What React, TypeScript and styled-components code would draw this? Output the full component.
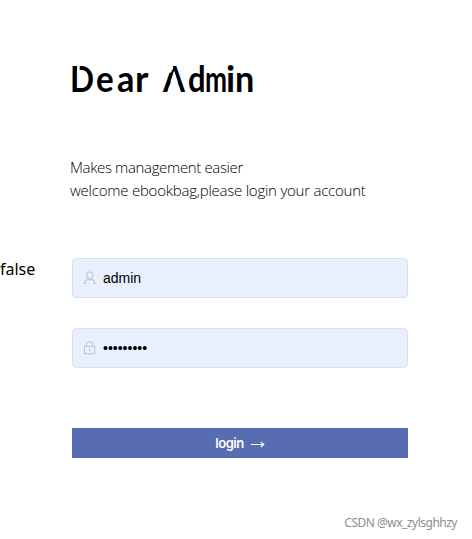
import React from 'react';
import styled, { createGlobalStyle } from 'styled-components';

const GlobalStyle = createGlobalStyle`
  * { box-sizing: border-box; }
  body { margin: 0; background: #fff; color: #000; overflow: hidden; }
`;

const Page = styled.div`
  width: 472px;
  height: 539px;
  display: grid;
  grid-template-columns: 70px 338px 1fr;
  grid-template-rows: 506px 33px;
`;

const Status = styled.span`
  padding-top: 258px;
  font: 16px/22px 'Noto Sans', sans-serif;
`;

const Panel = styled.main`
  display: flex;
  flex-direction: column;
  padding-top: 56px;
`;

const Title = styled.h1`
  display: flex;
  margin: 0;
  height: 44px;
  font: 700 36px/44px Lato, sans-serif;
  white-space: pre;
`;

const Letter = styled.span<{ $w: number; $sx?: number }>`
  position: relative;
  flex: none;
  width: ${p => p.$w}px;
  transform: scaleX(${p => p.$sx ?? 1});
  transform-origin: 0 0;
`;

const LetterD = styled(Letter)`
  &::after {
    content: '';
    position: absolute;
    left: 8px;
    top: 8px;
    width: 2.5px;
    height: 8px;
    background: #fff;
  }
`;

const LetterA = styled(Letter)`
  &::before {
    content: '';
    position: absolute;
    left: 0;
    top: 4px;
    width: 12px;
    height: 13px;
    background: #fff;
    clip-path: polygon(0 0, 78% 0, 100% 60%, 72% 100%, 0 60%);
  }
  &::after {
    content: '';
    position: absolute;
    left: 5px;
    top: 15px;
    width: 15.5px;
    height: 22px;
    background: #fff;
    clip-path: polygon(50% 0, 100% 100%, 0 100%);
  }
`;

const Intro = styled.p`
  margin: 56px 0 0;
  font: 300 15px/23px 'Open Sans', sans-serif;
  white-space: nowrap;
`;

const Line = styled.span<{ $spacing: number }>`
  display: block;
  letter-spacing: ${p => p.$spacing}px;
`;

const Form = styled.form`
  display: flex;
  flex-direction: column;
  margin: 56px 0 0 2px;
`;

const Field = styled.label`
  display: flex;
  align-items: center;
  height: 40px;
  margin-bottom: 30px;
  padding-left: 10px;
  border: 1px solid #dcdfe6;
  border-radius: 4px;
  background: #e8f0fe;
  color: #c0c4cc;
`;

const Input = styled.input`
  width: 280px;
  margin-left: 6px;
  padding: 0;
  border: 0;
  outline: 0;
  background: transparent;
  color: #000;
  font: 14px/20px 'Liberation Sans', Arial, sans-serif;
`;

const LoginButton = styled.button`
  display: flex;
  align-items: center;
  justify-content: center;
  gap: 7px;
  height: 30px;
  margin-top: 30px;
  padding: 1px 0 0;
  border: 0;
  background: #586cb1;
  color: #fff;
  font: 600 13px/29px Inter, sans-serif;
  letter-spacing: -0.45px;
`;

const Watermark = styled.footer`
  grid-column: 1 / -1;
  padding: 7px 15px 0 0;
  text-align: right;
  color: #8e8e8e;
  font: 12px/20px 'Noto Sans', sans-serif;
  letter-spacing: -0.5px;
`;

const UserIcon = () => (
  <svg width="14" height="14" viewBox="0 0 14 14" fill="none" stroke="currentColor" strokeWidth="1.1">
    <circle cx="6.7" cy="4.1" r="3.1" />
    <path d="M1.5 13v-1.2a3.2 3.2 0 0 1 3.2-3.2h4a3.2 3.2 0 0 1 3.2 3.2V13M1 12.5h2M10.4 12.5h2" />
  </svg>
);

const LockIcon = () => (
  <svg width="14" height="14" viewBox="0 0 14 14" fill="none" stroke="currentColor" strokeWidth="1.1">
    <rect x="1.5" y="5.3" width="10.3" height="7.4" rx="0.8" />
    <path d="M3.5 5.3V4a3.2 3.2 0 0 1 6.4 0v1.3M6.7 7.3v3.4" />
  </svg>
);

const Arrow = () => (
  <svg width="14" height="8" viewBox="0 0 14 8" fill="none" stroke="currentColor" strokeWidth="1.1">
    <path d="M0 4.5h12.7M9.8 2l3 2.5-3 2.5" />
  </svg>
);

export default function App() {
  return (
    <>
      <GlobalStyle />
      <Page>
        <Status>false</Status>
        <Panel>
          <Title>
            <LetterD $w={26} $sx={0.88}>D</LetterD>
            <Letter $w={21} $sx={0.92}>e</Letter>
            <Letter $w={18} $sx={0.95}>a</Letter>
            <Letter $w={28}>r </Letter>
            <LetterA $w={25} $sx={0.88}>A</LetterA>
            <Letter $w={17} $sx={0.86}>d</Letter>
            <Letter $w={21} $sx={0.73}>m</Letter>
            <Letter $w={9}>i</Letter>
            <Letter $w={18} $sx={0.95}>n</Letter>
          </Title>
          <Intro>
            <Line $spacing={-0.36}>Makes management easier</Line>
            <Line $spacing={-0.235}>welcome ebookbag,please login your account</Line>
          </Intro>
          <Form>
            <Field><UserIcon /><Input aria-label="Username" defaultValue="admin" /></Field>
            <Field><LockIcon /><Input aria-label="Password" type="password" defaultValue="admin1234" /></Field>
            <LoginButton type="button">login <Arrow /></LoginButton>
          </Form>
        </Panel>
        <Watermark>CSDN @wx_zylsghhzy</Watermark>
      </Page>
    </>
  );
}
